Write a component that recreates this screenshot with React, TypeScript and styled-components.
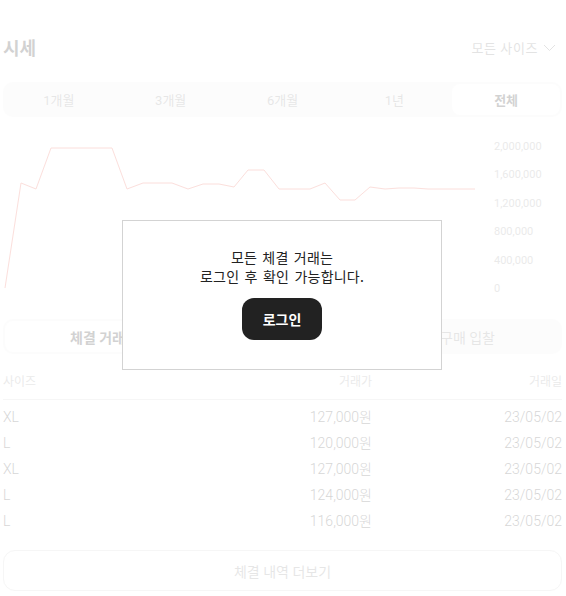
import React from "react";
import styled, { createGlobalStyle } from "styled-components";

const GlobalStyle = createGlobalStyle`
  html, body { margin: 0; padding: 0; background: #fff; }
  body { font-family: Roboto, "Noto Sans CJK KR", sans-serif; color: #222; }
  * { box-sizing: border-box; }
`;

const Page = styled.div`
  position: relative;
  width: 559px;
  margin-left: 3px;
`;

const Content = styled.div`
  padding-top: 30px;
  padding-bottom: 5px;
  opacity: 0.2;
`;

const Header = styled.div`
  height: 34px;
  display: flex;
  align-items: center;
  justify-content: space-between;
`;

const Title = styled.h2`
  margin: 0;
  font-size: 18px;
  font-weight: 700;
  color: #222;
`;

const SizeSelect = styled.div`
  display: flex;
  align-items: center;
  gap: 5px;
  font-size: 13px;
  letter-spacing: 0.6px;
  color: #777;
  padding-right: 6px;
`;

const SegmentBar = styled.div<{ $cols: number; $gap: number; $height: number }>`
  display: grid;
  grid-template-columns: repeat(${(p) => p.$cols}, 1fr);
  gap: ${(p) => p.$gap}px;
  height: ${(p) => p.$height}px;
  padding: 2px;
  background: #f4f4f4;
  border-radius: 10px;
`;

const PeriodBar = styled(SegmentBar)`
  margin-top: 18px;
`;

const TradeBar = styled(SegmentBar)`
  margin-top: 19px;
`;

const Segment = styled.div<{ $active?: boolean; $size: number }>`
  display: flex;
  align-items: center;
  justify-content: center;
  border-radius: 8px;
  font-size: ${(p) => p.$size}px;
  font-weight: ${(p) => (p.$active ? 700 : 400)};
  color: ${(p) => (p.$active ? "#222" : "#888")};
  background: ${(p) => (p.$active ? "#fff" : "transparent")};
`;

const Chart = styled.div`
  margin-top: 18px;
  height: 165px;
  display: grid;
  grid-template-columns: 490px 1fr;
`;

const LineArea = styled.div`
  height: 165px;
  svg { display: block; }
`;

const YAxis = styled.div`
  padding-left: 1px;
  padding-top: 5px;
  height: 161px;
  display: flex;
  flex-direction: column;
  justify-content: space-between;
`;

const YLabel = styled.span`
  font-size: 11px;
  line-height: 14px;
  color: #999;
`;

const TableGrid = styled.div`
  display: grid;
  grid-template-columns: 1fr 180px 190px;
`;

const TableHead = styled(TableGrid)`
  margin-top: 16px;
  padding-bottom: 5px;
  border-bottom: 1px solid #d3d3d3;
  font-size: 12px;
  line-height: 24px;
  color: #999;
`;

const Rows = styled.div`
  padding-top: 4px;
`;

const Row = styled(TableGrid)`
  height: 26px;
  font-size: 14px;
  font-weight: 300;
  line-height: 26px;
  color: #333;
`;

const Cell = styled.span<{ $right?: boolean }>`
  text-align: ${(p) => (p.$right ? "right" : "left")};
`;

const MoreButton = styled.button`
  display: block;
  width: 100%;
  height: 41px;
  margin-top: 16px;
  border: 1px solid #d3d3d3;
  border-radius: 12px;
  background: #fff;
  font-family: Roboto, "Noto Sans CJK KR", sans-serif;
  font-size: 14px;
  color: #888;
`;

const LoginOverlay = styled.div`
  position: absolute;
  top: 220px;
  left: 119px;
  width: 320px;
  height: 150px;
  background: #fff;
  border: 1px solid #d3d3d3;
  display: flex;
  flex-direction: column;
  align-items: center;
  padding-top: 27px;
`;

const Message = styled.p`
  margin: 0;
  font-family: "Noto Sans CJK KR", sans-serif;
  font-size: 14px;
  line-height: 19px;
  letter-spacing: 0.2px;
  word-spacing: 2px;
  color: #222;
  text-align: center;
`;

const LoginButton = styled.button`
  margin-top: 12px;
  width: 80px;
  height: 42px;
  border: none;
  border-radius: 12px;
  background: #222;
  color: #fff;
  font-family: "Noto Sans CJK KR", sans-serif;
  font-size: 14px;
  font-weight: 700;
`;

const periods = ["1개월", "3개월", "6개월", "1년", "전체"];
const tradeTabs = ["체결 거래", "판매 입찰", "구매 입찰"];
const yLabels = ["2,000,000", "1,600,000", "1,200,000", "800,000", "400,000", "0"];
const trades = [
  ["XL", "127,000원", "23/05/02"],
  ["L", "120,000원", "23/05/02"],
  ["XL", "127,000원", "23/05/02"],
  ["L", "124,000원", "23/05/02"],
  ["L", "116,000원", "23/05/02"],
];
const linePoints =
  "2,153 18,48 33,54 48,13 109,13 124,54 140,48 169,48 185,54 200,49 216,49 231,52 245,35 261,35 276,54 307,54 322,48 337,65 352,65 367,52 382,54 396,53 411,53 425,54 472,54";

export default function App() {
  return (
    <>
      <GlobalStyle />
      <Page>
        <Content>
          <Header>
            <Title>시세</Title>
            <SizeSelect>
              모든 사이즈
              <svg width="13" height="13" viewBox="0 0 13 13" fill="none">
                <polyline points="1,4 6.5,9.5 12,4" stroke="#777" strokeWidth="1" />
              </svg>
            </SizeSelect>
          </Header>
          <PeriodBar $cols={5} $gap={4} $height={35}>
            {periods.map((p) => (
              <Segment key={p} $active={p === "전체"} $size={13}>
                {p}
              </Segment>
            ))}
          </PeriodBar>
          <Chart>
            <LineArea>
              <svg width="490" height="165" viewBox="0 0 490 165">
                <polyline points={linePoints} fill="none" stroke="#ef6253" strokeWidth="1" />
              </svg>
            </LineArea>
            <YAxis>
              {yLabels.map((l) => (
                <YLabel key={l}>{l}</YLabel>
              ))}
            </YAxis>
          </Chart>
          <TradeBar $cols={3} $gap={0} $height={35}>
            {tradeTabs.map((t, i) => (
              <Segment key={t} $active={i === 0} $size={14}>
                {t}
              </Segment>
            ))}
          </TradeBar>
          <TableHead>
            <Cell>사이즈</Cell>
            <Cell $right>거래가</Cell>
            <Cell $right>거래일</Cell>
          </TableHead>
          <Rows>
            {trades.map((r, i) => (
              <Row key={i}>
                <Cell>{r[0]}</Cell>
                <Cell $right>{r[1]}</Cell>
                <Cell $right>{r[2]}</Cell>
              </Row>
            ))}
          </Rows>
          <MoreButton>체결 내역 더보기</MoreButton>
        </Content>
        <LoginOverlay>
          <Message>
            모든 체결 거래는
            <br />
            로그인 후 확인 가능합니다.
          </Message>
          <LoginButton>로그인</LoginButton>
        </LoginOverlay>
      </Page>
    </>
  );
}
